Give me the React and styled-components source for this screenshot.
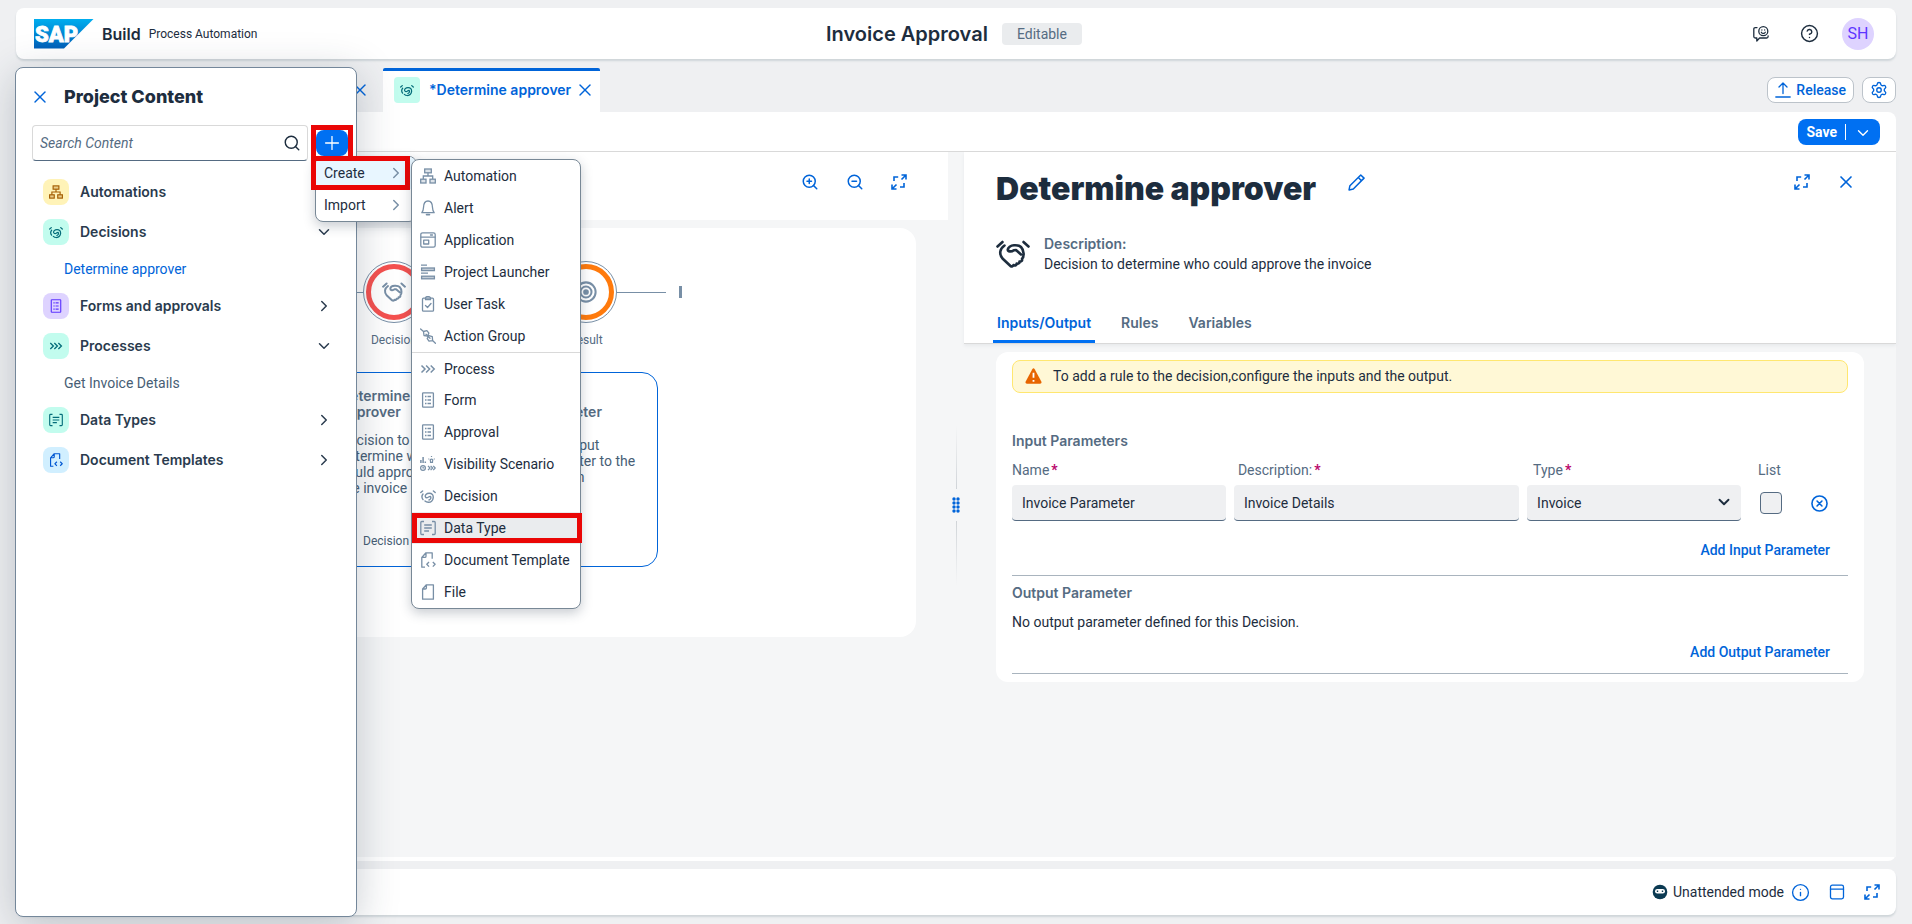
import React from "react";
import styled, { createGlobalStyle, css } from "styled-components";
import { X, Search, Plus, ChevronRight, ChevronDown, ZoomIn, ZoomOut, CircleQuestionMark, Info, Settings } from "lucide-react";

const font = `"Roboto", "Liberation Sans", sans-serif`;
const boldFont = `"Inter", "Roboto", "Liberation Sans", sans-serif`;
const c = {
  text: "#1d2d3e",
  label: "#556b82",
  icon: "#788fa6",
  blue: "#0064d9",
  brand: "#0070f2",
  line: "#d9d9d9",
  shell: "#eff0f2",
  base: "#f5f6f7",
  red: "#ea0606",
};

const strong = css`
  font-family: ${boldFont};
  font-weight: 600;
`;

const Global = createGlobalStyle`
  * { box-sizing: border-box; }
  body { margin: 0; background: ${c.shell}; color: ${c.text}; font: 14px/20px ${font}; }
  h1, h2, h3, p, ul { margin: 0; padding: 0; }
  h1, h2, h3 { font-family: ${boldFont}; }
  ul { list-style: none; }
  button, input, select { font: inherit; color: inherit; margin: 0; }
  button { border: 0; padding: 0; background: none; cursor: pointer; }
  svg { display: block; flex: none; }
`;

/* ---------- icons ---------- */

const Svg = ({ size = 16, vb = "0 0 16 16", w = 1.3, children, ...rest }) => (
  <svg width={size} height={size} viewBox={vb} fill="none" stroke="currentColor" strokeWidth={w} strokeLinecap="round" strokeLinejoin="round" aria-hidden="true" {...rest}>
    {children}
  </svg>
);
const AutomationIcon = (p) => (
  <Svg {...p} strokeLinecap="butt" strokeLinejoin="miter">
    <rect x="4.7" y="1" width="6.6" height="3.8" fill="currentColor" fillOpacity=".25" />
    <rect x=".7" y="11.2" width="5.3" height="3.8" fill="currentColor" fillOpacity=".25" />
    <rect x="10" y="11.2" width="5.3" height="3.8" fill="currentColor" fillOpacity=".25" />
    <path d="M8 4.8V8M3.3 11V8h9.4v3" />
  </Svg>
);
const BellIcon = (p) => (
  <Svg {...p}>
    <path d="M1.8 12.7h12.4c-1.5-1.4-1.6-3-1.7-5.2C12.4 3.5 10.7 1 8 1S3.6 3.5 3.5 7.5c-.1 2.2-.2 3.8-1.7 5.2z" />
    <path d="M6.6 14.6h2.8" strokeWidth="1.8" />
  </Svg>
);
const AppIcon = (p) => (
  <Svg {...p}>
    <rect x=".8" y=".8" width="14.4" height="14.4" rx="1.8" />
    <path d="M1 5.2h14M10.5 3h2" />
    <rect x="3.7" y="8.2" width="5" height="3.8" />
  </Svg>
);
const LauncherIcon = (p) => (
  <Svg {...p} strokeLinecap="butt" strokeLinejoin="miter">
    <path d="M1 1.2h6M1 9.2h7" />
    <rect x="1.6" y="4" width="12.8" height="2.6" fill="currentColor" fillOpacity=".45" />
    <rect x="1.6" y="12.2" width="12.8" height="2.6" fill="currentColor" fillOpacity=".45" />
  </Svg>
);
const TaskIcon = (p) => (
  <Svg {...p}>
    <rect x="2.5" y="2.2" width="11" height="13" rx="1" />
    <path d="M5.5 2.2a2.5 1.7 0 0 1 5 0v1.5h-5zM5.5 9.5l2 2 3.5-4" />
  </Svg>
);
const ActionIcon = (p) => (
  <Svg {...p}>
    <path d="M.6.9 3.5 3.5M12.6 12.6l2.8 2.6M3.5 3.5l3.4-.9 2 2.5-1.4 3-3.5-.6zM12.6 12.6l-3.6.6-1.8-2.6 1.7-3 3.4 1z" />
    <path d="m6 6.2 4 4" />
  </Svg>
);
const ProcessIcon = (p) => (
  <Svg {...p} w={1.5} strokeLinecap="butt" strokeLinejoin="miter">
    <path d="M1.5 4.5 5 8l-3.5 3.5M6.1 4.5 9.6 8l-3.5 3.5M10.7 4.5 14.2 8l-3.5 3.5" />
  </Svg>
);
const FormIcon = (p) => (
  <Svg {...p} strokeLinecap="butt">
    <rect x="2.6" y=".8" width="10.8" height="14.4" rx=".6" />
    <path d="M5 4.5h1.5M7.5 4.5H11M5 8h1.5M7.5 8H11M5 11.5h1.5M7.5 11.5H11" />
  </Svg>
);
const VisibilityIcon = (p) => (
  <Svg {...p} w={1.2} strokeLinecap="butt">
    <path d="M.9 7V4M3.1 7V1M5.3 7V5.5" strokeWidth="1.5" />
    <path d="M10.5 4.8c-1.6-2.2 3.6-2.2 2 0v1.6h-2zM11.5 0v1M8.3 3h1M13.8 3h1" />
    <circle cx="3" cy="12" r="2.4" />
    <path d="M3 10.8V12h1.3M8 9.8l2 2.2-2 2.2M10.6 9.8l2 2.2-2 2.2M13.2 9.8l2 2.2-2 2.2" />
  </Svg>
);
const HandshakeIcon = ({ w = 2.8, ...p }) => (
  <Svg vb="0 -3 34 34" w={w} {...p}>
    <path d="M1.5 6.5l5-4.5M27.500 2l5 4.500" />
    <path d="M8.500 5.500C3.500 9 3 14 6.500 18.500l8 7.500c1.500.8 2.500.2 3-1 1.800 1 3 .2 3.200-1.500 1.800.6 3-.4 2.800-2 2 .4 3-1 2.500-2.800 2.200-1.600 2.400-8.200-1-11.700-2-2-4.500-1.800-7-1.700-3.500.1-6 2.200-6.200 4.200-.1 2.200 3.600 2.600 6 .7l2.200-.2 5 4.500" />
  </Svg>
);
/* The compact variant is drawn wider and lower so that it stays legible at 16px. */
const SmallHandshakeIcon = (p) => (
  <Svg {...p} w={1.4}>
    <path d="M.8 4.600 2.600 3M13.400 3l1.800 1.600M3 6C1.400 8 1.800 10 3 11.600M5 13c1.600 1.600 5 1.800 6.600.2 1.800-1.600 2.200-5 .8-6.800C11 5 7.600 4.800 6 6.400c-1.400 1.500-.6 3.600 1 3.400 1.500-.2 2-1.600 3.400-1.400.8 1.200.6 2.800-1.400 3.600" />
  </Svg>
);
const DataIcon = (p) => (
  <Svg {...p} strokeLinecap="butt">
    <path d="M4 1.500H1.800c-.6 0-1 .4-1 1v11c0 .6.4 1 1 1H4M12 1.500h2.200c.6 0 1 .4 1 1v11c0 .6-.4 1-1 1H12M4.200 5h7.600M4.200 8h7.600M4.200 11H9" />
  </Svg>
);
const TemplateIcon = (p) => (
  <Svg {...p} strokeLinecap="butt">
    <path d="M5 15.200H1.800V5.500L6 .8h6.200v6M6 .8v3.400c0 .8-.4 1.200-1.200 1.200H1.800" />
    <path d="m9 10-2.200 2.300L9 14.600M12.800 10l2.300 2.300-2.300 2.300" />
  </Svg>
);
const FileIcon = (p) => (
  <Svg {...p}>
    <path d="M2.600 15.200V5L6.400.8h7v14.400zM6.400.8v3c0 .8-.4 1.200-1.200 1.200H2.600" />
  </Svg>
);
const ExpandIcon = (p) => (
  <Svg {...p} w={1.6} strokeLinecap="butt" strokeLinejoin="miter">
    <path d="M10.500 1H15v4.500M15 1l-4.500 4.500M5.500 15H1v-4.500M1 15l4.500-4.500M3 7V3h4.200M13 9v4H9" />
  </Svg>
);
const PencilIcon = (p) => (
  <Svg {...p} w={1.4}>
    <path d="M1 15l.8-4L12 .9l3.100 3L5 14.200zM9.700 3.300l3 3" />
  </Svg>
);
const TargetIcon = (p) => (
  <Svg {...p} vb="0 0 24 24" w={2.2}>
    <circle cx="12" cy="12" r="10.5" />
    <circle cx="12" cy="12" r="6" />
    <circle cx="12" cy="12" r="2" fill="currentColor" />
  </Svg>
);
const UploadIcon = (p) => (
  <Svg {...p}>
    <path d="M8 11.500V1.200M4 5l4-4 4 4M.8 15h14.400" />
  </Svg>
);
const FeedbackIcon = (p) => (
  <Svg {...p}>
    <circle cx="10.3" cy="5.2" r="4.5" />
    <path d="M8.300 6.200c.9 1.600 3.100 1.600 4 0M8.900 3.900v.1M11.700 3.900v.1" />
    <path d="M4 1.600H2.300c-1 0-1.500.6-1.500 1.500v7.400c0 1 .5 1.500 1.500 1.500h1.500v3l2.800-3h7c1 0 1.500-.5 1.500-1.500V9.800" />
  </Svg>
);
const RemoveIcon = (p) => (
  <Svg {...p} w={1.5}>
    <circle cx="8" cy="8" r="7.1" />
    <path d="M5.700 5.700l4.600 4.600M10.300 5.700l-4.600 4.600" />
  </Svg>
);
const WarningIcon = () => (
  <svg width="17" height="16" viewBox="0 0 17 16" aria-hidden="true">
    <path d="M7.300 1.200q1.200-2 2.400 0l6.600 12.200q.8 2-1.200 2.300H1.900q-2-.3-1.200-2.300z" fill="#e76500" />
    <path d="M8.500 4.800v5M8.500 12v1.800" stroke="#fff" strokeWidth="1.8" />
  </svg>
);
const RobotIcon = () => (
  <svg width="16" height="16" viewBox="0 0 16 16" aria-hidden="true">
    <circle cx="8" cy="8" r="7.3" fill="#0b3a52" />
    <rect x="3" y="5" width="10" height="4.6" rx="2.3" fill="#fff" />
    <path d="M5.500 6.500v1.600M10.500 6.500v1.600" stroke="#0b3a52" strokeWidth="1.4" />
  </svg>
);
const WindowIcon = () => (
  <Svg>
    <rect x="1.5" y="1.2" width="13" height="13.6" rx="1.8" />
    <path d="M1.500 5.200h13" />
  </Svg>
);
const SapLogo = () => (
  <svg width="60" height="30" viewBox="0 0 60 30" role="img" aria-label="SAP">
    <defs>
      <linearGradient id="sapBlue" x1="0" y1="0" x2="0" y2="1">
        <stop offset="0" stopColor="#00aeef" />
        <stop offset="1" stopColor="#005fb8" />
      </linearGradient>
    </defs>
    <path d="M0 0h59.500L30 29.500H0z" fill="url(#sapBlue)" />
    <text x="1" y="23" fill="#fff" stroke="#fff" strokeWidth=".8" fontFamily="Roboto, sans-serif" fontSize="22" fontWeight="900">SAP</text>
  </svg>
);

/* ---------- shell ---------- */

const Page = styled.div`
  position: relative;
  display: flex;
  flex-direction: column;
  min-height: 100vh;
  padding: 8px 16px 9px;
  overflow: hidden;
`;
const surface = css`
  background: #fff;
  border-radius: 8px;
  box-shadow: 0 2px 2px #cfd5d9;
`;
const ShellBar = styled.header`
  ${surface}
  display: grid;
  grid-template-columns: 1fr auto 1fr;
  align-items: center;
  height: 51px;
  padding: 0 22px 0 18px;
`;
const Brand = styled.div`
  display: flex;
  align-items: center;
  gap: 8px;
`;
const BrandName = styled.span`
  ${strong}
  font-size: 16px;
`;
const BrandSub = styled.span`
  font-size: 12px;
`;
const ProjectTitle = styled.div`
  display: flex;
  align-items: center;
  gap: 14px;
  h2 { font-size: 20px; line-height: 24px; font-weight: 600; }
`;
const Tag = styled.span`
  padding: 1px 15px;
  border-radius: 4px;
  background: #eaecee;
  color: ${c.label};
`;
const ShellActions = styled.div`
  display: flex;
  justify-content: flex-end;
  align-items: center;
  gap: 31px;
`;
const Avatar = styled.button`
  width: 32px;
  height: 32px;
  margin-left: -8px;
  border-radius: 50%;
  background: #ded3ff;
  color: #5d36ff;
  font-size: 16px;
`;
const IconButton = styled.button`
  display: flex;
  align-items: center;
  justify-content: center;
  color: ${(p) => p.$color || c.blue};
`;

const TabBar = styled.nav`
  display: flex;
  height: 44px;
  margin-top: 9px;
`;
const Tab = styled.div`
  ${strong}
  display: flex;
  align-items: center;
  gap: 4px;
  padding: 0 5px 3px 11px;
  border-top: 3px solid ${c.blue};
  border-radius: 2px 2px 0 0;
  background: #fff;
  color: ${c.blue};
  > span { margin-right: 5px; }
`;
const BackTab = styled.div`
  display: flex;
  justify-content: flex-end;
  align-items: center;
  width: 367px;
  padding-right: 13px;
`;
const TabActions = styled.div`
  display: flex;
  align-items: center;
  gap: 8px;
  margin-left: auto;
`;
const OutlineButton = styled.button`
  display: flex;
  align-items: center;
  justify-content: center;
  gap: 5px;
  height: 26px;
  && { padding: 0 7px; }
  border: 1px solid #bcc3ca;
  border-radius: 8px;
  background: #fff;
  color: ${c.blue};
  font-weight: 500;
`;

const Workspace = styled.main`
  display: flex;
  flex-direction: column;
  flex: 1;
  padding-bottom: 4px;
  border-radius: 0 8px 8px 8px;
  background: #fff;
`;
const Toolbar = styled.div`
  display: flex;
  justify-content: flex-end;
  align-items: center;
  height: 40px;
  padding: 0 16px;
  border-bottom: 1px solid ${c.line};
`;
const SplitButton = styled.div`
  display: flex;
  align-items: center;
  height: 26px;
  border-radius: 8px;
  background: ${c.brand};
  color: #fff;
  font-weight: 700;
  button { height: 16px; line-height: 16px; }
  button:first-child { padding: 0 8px; }
  button:last-child { padding: 0 8px; border-left: 1px solid #fff; }
`;
const Panels = styled.div`
  display: flex;
  flex: 1;
  background: ${c.base};
`;

/* ---------- diagram side ---------- */

const DiagramPanel = styled.section`
  flex: 1 1 0;
  min-width: 0;
`;
const DiagramTools = styled.div`
  display: flex;
  justify-content: flex-end;
  gap: 27px;
  height: 68px;
  padding: 0 41px 8px;
  background: #fff;
`;
const Canvas = styled.div`
  margin: 8px 32px 0;
  padding: 33px 0 70px;
  border-radius: 16px;
  background: #fff;
  overflow: hidden;
`;
const Flow = styled.div`
  display: flex;
  margin-left: 273px;
`;
const Connector = styled.div`
  width: ${(p) => p.$width}px;
  height: 1px;
  margin-top: 31px;
  background: ${c.icon};
`;
const EndMark = styled.div`
  width: 3px;
  height: 12px;
  margin: 25px 0 0 13px;
  background: ${c.icon};
`;
const Node = styled.div`
  display: flex;
  flex-direction: column;
  align-items: center;
  gap: 7px;
  width: 62px;
  color: ${c.label};
  font-size: 12px;
`;
const Ring = styled.div`
  display: flex;
  align-items: center;
  justify-content: center;
  width: 62px;
  height: 62px;
  padding: 2px;
  border: 1px solid ${c.icon};
  border-radius: 50%;
  color: ${c.icon};
  span {
    display: flex;
    align-items: center;
    justify-content: center;
    width: 100%;
    height: 100%;
    border: 5px solid ${(p) => p.$color};
    border-radius: 50%;
  }
`;
const NodeCards = styled.div`
  display: flex;
  gap: 84px;
  width: 336px;
  height: 195px;
  margin: 22px 0 0 274px;
  padding: 15px 17px 17px;
  border: 1px solid ${c.blue};
  border-radius: 16px;
`;
const NodeCard = styled.article`
  display: flex;
  flex-direction: column;
  gap: ${(p) => p.$gap}px;
  width: 108px;
  line-height: 16px;
  color: #475e75;
  h3 { font-size: 14px; line-height: 16px; font-weight: 600; color: ${c.label}; }
  footer { margin: auto 0 0 23px; font-size: 12px; }
`;

const Splitter = styled.div`
  display: flex;
  flex-direction: column;
  align-items: center;
  gap: 8px;
  width: 16px;
  padding-top: 273px;
`;
const SplitterLine = styled.div`
  width: 1px;
  height: 64px;
  background: linear-gradient(${(p) => (p.$up ? "to top" : "to bottom")}, #d0d4d8, transparent);
`;

/* ---------- properties side ---------- */

const PropertyPanel = styled.section`
  flex: 1 1 0;
  min-width: 0;
`;
const PanelHead = styled.div`
  padding: 16px 40px 0 32px;
  border-bottom: 1px solid ${c.line};
  background: #fff;
  box-shadow: 0 2px 3px #e8eaec;
`;
const TitleRow = styled.div`
  display: flex;
  gap: 32px;
  height: 42px;
  h1 { font-size: 32px; line-height: 42px; font-weight: 900; }
  button { height: 28px; }
`;
const PanelActions = styled.div`
  display: flex;
  gap: 26px;
  margin-left: auto;
`;
const DescRow = styled.div`
  display: flex;
  align-items: center;
  gap: 14px;
  margin-top: 24px;
  b { ${strong} display: block; color: ${c.label}; }
`;
const PropTabs = styled.div`
  display: flex;
  gap: 22px;
  margin: 33px 0 0 -3px;
`;
const PropTab = styled.button`
  ${strong}
  height: 36px;
  && { padding: 0 4px 2px; }
  border-bottom: 3px solid ${(p) => (p.$active ? c.brand : "transparent")};
  color: ${(p) => (p.$active ? c.blue : c.label)};
`;
const Card = styled.div`
  margin: 8px 32px 0;
  padding: 8px 16px;
  border-radius: 12px;
  background: #fff;
`;
const Message = styled.div`
  display: flex;
  align-items: center;
  gap: 11px;
  height: 33px;
  padding: 0 12px 1px;
  border: 1px solid #ffe770;
  border-radius: 8px;
  background: #fff8d6;
`;
const Section = styled.section`
  padding-top: ${(p) => p.$top}px;
  border-bottom: 1px solid #a9b4be;
  h3 { font-size: 14px; line-height: 20px; font-weight: 600; color: ${c.label}; }
  p { margin-top: 9px; }
`;
const Fields = styled.div`
  display: grid;
  grid-template-columns: 3fr 4fr 3fr 46px 45px;
  gap: 8px;
  margin-top: 9px;
`;
const Field = styled.div`
  position: relative;
  display: flex;
  flex-direction: column;
  gap: 5px;
  min-width: 0;
  label { height: 20px; padding-left: ${(p) => p.$inset || 0}px; color: ${c.label}; }
  label b { margin-left: 2px; color: #ba066c; }
  > svg { position: absolute; right: 8px; bottom: 10px; pointer-events: none; }
`;
const control = css`
  width: 100%;
  height: 36px;
  padding: 0 10px;
  border: 0;
  border-bottom: 1px solid ${c.label};
  border-radius: 4px;
  background: ${c.shell};
  appearance: none;
`;
const TextInput = styled.input`${control}`;
const Select = styled.select`${control}`;
const Check = styled.input`
  appearance: none;
  width: 22px;
  height: 22px;
  && { margin: 7px 0 0 11px; }
  border: 1px solid ${c.label};
  border-radius: 4px;
  background: ${c.shell};
`;
const RemoveButton = styled(IconButton)`
  align-self: end;
  justify-self: start;
  height: 36px;
  && { padding-left: 8px; }
`;
const AddButton = styled.button`
  display: block;
  && { margin: ${(p) => p.$above}px 18px ${(p) => p.$below}px auto; }
  color: ${c.blue};
  font-weight: 500;
`;

const StatusBar = styled.footer`
  ${surface}
  display: flex;
  justify-content: flex-end;
  align-items: center;
  gap: 7px;
  height: 46px;
  margin-top: 8px;
  padding: 0 16px;
`;
const StatusTools = styled.div`
  display: flex;
  gap: 19px;
`;
const Mode = styled.span`
  display: flex;
  align-items: center;
  gap: 5px;
`;

/* ---------- project drawer ---------- */

const Drawer = styled.aside`
  position: absolute;
  top: 67px;
  bottom: 7px;
  left: 15px;
  width: 342px;
  border: 1px solid #74879a;
  border-radius: 8px;
  background: #fff;
  box-shadow: 0 8px 40px rgba(34, 53, 72, 0.25);
`;
const DrawerHead = styled.div`
  display: flex;
  align-items: center;
  gap: 14px;
  height: 57px;
  padding: 0 14px;
  h2 { font-size: 18px; line-height: 24px; font-weight: 800; }
`;
const SearchRow = styled.div`
  display: flex;
  align-items: center;
  gap: 8px;
  padding: 0 8px 0 16px;
`;
const SearchBox = styled.label`
  display: flex;
  align-items: center;
  flex: 1;
  min-width: 0;
  height: 36px;
  padding: 0 6px 0 7px;
  border: 1px solid ${c.line};
  border-bottom-color: ${c.label};
  border-radius: 4px;
  input { flex: 1; min-width: 0; border: 0; padding: 0; outline: 0; background: none; }
  input::placeholder { color: ${c.label}; font-style: italic; opacity: 1; }
`;
const AddMenu = styled.div`
  position: relative;
`;
const AddContent = styled.button`
  display: flex;
  align-items: center;
  justify-content: center;
  width: 32px;
  height: 26px;
  border-radius: 8px;
  background: ${c.brand};
  color: #fff;
`;
const Highlight = styled.span`
  position: absolute;
  inset: ${(p) => p.$inset};
  z-index: 2;
  border: 5px solid ${c.red};
  pointer-events: none;
`;
const Menu = styled.ul`
  position: absolute;
  z-index: 1;
  top: ${(p) => p.$top}px;
  left: ${(p) => p.$left}px;
  width: ${(p) => p.$width}px;
  border: 1px solid #788896;
  border-radius: 8px;
  background: #fff;
  box-shadow: 0 4px 12px rgba(34, 53, 72, 0.25);
`;
const MenuItem = styled.li`
  position: relative;
  border-top: ${(p) => (p.$divided ? `1px solid ${c.line}` : 0)};
  button {
    display: flex;
    align-items: center;
    gap: 8px;
    width: 100%;
    height: ${(p) => (p.$divided ? 31 : 32)}px;
    padding: 0 ${(p) => (p.$sub ? 11 : 8)}px 0 8px;
    border-radius: ${(p) => (p.$round ? "7px 7px 0 0" : 0)};
    background: ${(p) => p.$fill || "none"};
    text-align: left;
    white-space: nowrap;
  }
  svg { color: ${c.icon}; }
`;
const ItemLabel = styled.span`
  flex: 1;
`;
const Tree = styled.ul`
  margin-top: 11px;
`;
const Group = styled.button`
  ${strong}
  display: flex;
  align-items: center;
  gap: 11px;
  width: 100%;
  height: 40px;
  && { padding: 0 23px 0 27px; }
  color: #2a3b4e;
  > svg { margin-left: auto; }
`;
const Badge = styled.span`
  display: flex;
  align-items: center;
  justify-content: center;
  width: 26px;
  height: 26px;
  border-radius: ${(p) => p.$radius || 8}px;
  background: ${(p) => p.$bg};
  color: ${(p) => p.$fg};
`;
const Leaf = styled.a`
  display: block;
  height: 34px;
  padding: 7px 0 7px 48px;
  color: ${(p) => (p.$active ? c.blue : "#475e75")};
  text-decoration: none;
`;

const teal = { $bg: "#c2fcee", $fg: "#046c7a" };
const groups = [
  { name: "Automations", icon: AutomationIcon, $bg: "#fff3b8", $fg: "#a45d00" },
  { name: "Decisions", icon: SmallHandshakeIcon, ...teal, open: true, leaf: "Determine approver", active: true },
  { name: "Forms and approvals", icon: FormIcon, $bg: "#ded3ff", $fg: "#5d36ff" },
  { name: "Processes", icon: ProcessIcon, ...teal, open: true, leaf: "Get Invoice Details" },
  { name: "Data Types", icon: DataIcon, ...teal },
  { name: "Document Templates", icon: TemplateIcon, $bg: "#d1efff", $fg: "#0057d2" },
];
const createItems = [
  ["Automation", AutomationIcon],
  ["Alert", BellIcon],
  ["Application", AppIcon],
  ["Project Launcher", LauncherIcon],
  ["User Task", TaskIcon],
  ["Action Group", ActionIcon],
  ["Process", ProcessIcon],
  ["Form", FormIcon],
  ["Approval", FormIcon],
  ["Visibility Scenario", VisibilityIcon],
  ["Decision", SmallHandshakeIcon],
  ["Data Type", DataIcon],
  ["Document Template", TemplateIcon],
  ["File", FileIcon],
];

function ProjectDrawer() {
  return (
    <Drawer>
      <DrawerHead>
        <IconButton aria-label="Close project content"><X size={20} strokeWidth={1.7} /></IconButton>
        <h2>Project Content</h2>
      </DrawerHead>
      <SearchRow>
        <SearchBox>
          <input type="search" placeholder="Search Content" aria-label="Search Content" />
          <Search size={18} strokeWidth={1.9} />
        </SearchBox>
        <AddMenu>
          <AddContent aria-label="Add content"><Plus size={22} strokeWidth={1.4} /></AddContent>
          <Highlight $inset="-5px" />
          <Menu $top={26} $left={-1} $width={102}>
            <MenuItem $fill="#e8f6ff" $round $sub>
              <button><ItemLabel>Create</ItemLabel><ChevronRight size={18} /></button>
              <Highlight $inset="-1px 6px -1px -5px" />
            </MenuItem>
            <MenuItem $sub>
              <button><ItemLabel>Import</ItemLabel><ChevronRight size={18} /></button>
            </MenuItem>
          </Menu>
          <Menu $top={29} $left={95} $width={170}>
            {createItems.map(([name, Icon]) => (
              <MenuItem key={name} $divided={name === "Process"} $fill={name === "Data Type" ? "#eaecee" : undefined}>
                <button><Icon /><ItemLabel>{name}</ItemLabel></button>
                {name === "Data Type" && <Highlight $inset="1px -2px 1px 0" />}
              </MenuItem>
            ))}
          </Menu>
        </AddMenu>
      </SearchRow>
      <Tree>
        {groups.map(({ name, icon: Icon, $bg, $fg, open, leaf, active }) => (
          <li key={name}>
            <Group>
              <Badge $bg={$bg} $fg={$fg}><Icon size={14} /></Badge>
              {name}
              {name !== "Automations" && (open ? <ChevronDown size={18} /> : <ChevronRight size={18} />)}
            </Group>
            {leaf && <Leaf href="#" $active={active}>{leaf}</Leaf>}
          </li>
        ))}
      </Tree>
    </Drawer>
  );
}

function Diagram() {
  return (
    <DiagramPanel>
      <DiagramTools>
        <IconButton aria-label="Zoom in"><ZoomIn size={18} /></IconButton>
        <IconButton aria-label="Zoom out"><ZoomOut size={18} /></IconButton>
        <IconButton aria-label="Fit to screen"><ExpandIcon /></IconButton>
      </DiagramTools>
      <Canvas>
        <Flow>
          <Connector $width={42} />
          <Node><Ring $color="#f5514f"><span><HandshakeIcon size={24} w={2.8} /></span></Ring>Decision</Node>
          <Connector $width={130} />
          <Node><Ring $color="#ff7a0c"><span><TargetIcon size={22} /></span></Ring>Result</Node>
          <Connector $width={49} />
          <EndMark />
        </Flow>
        <NodeCards>
          <NodeCard $gap={12}>
            <h3>Determine approver</h3>
            <p>Decision to determine who could approve the invoice</p>
            <footer>Decision</footer>
          </NodeCard>
          <NodeCard $gap={17}>
            <h3>Output Parameter</h3>
            <p>The output parameter to the decision</p>
          </NodeCard>
        </NodeCards>
      </Canvas>
    </DiagramPanel>
  );
}

function Properties() {
  return (
    <PropertyPanel>
      <PanelHead>
        <TitleRow>
          <h1>Determine approver</h1>
          <IconButton aria-label="Edit"><PencilIcon size={17} /></IconButton>
          <PanelActions>
            <IconButton aria-label="Full screen"><ExpandIcon /></IconButton>
            <IconButton aria-label="Close"><X size={20} /></IconButton>
          </PanelActions>
        </TitleRow>
        <DescRow>
          <HandshakeIcon size={34} w={2.6} />
          <div><b>Description:</b>Decision to determine who could approve the invoice</div>
        </DescRow>
        <PropTabs>
          <PropTab $active>Inputs/Output</PropTab>
          <PropTab>Rules</PropTab>
          <PropTab>Variables</PropTab>
        </PropTabs>
      </PanelHead>
      <Card>
        <Message><WarningIcon />To add a rule to the decision,configure the inputs and the output.</Message>
        <Section $top={38}>
          <h3>Input Parameters</h3>
          <Fields>
            <Field><label htmlFor="name">Name<b>*</b></label><TextInput id="name" defaultValue="Invoice Parameter" /></Field>
            <Field $inset={4}><label htmlFor="desc">Description:<b>*</b></label><TextInput id="desc" defaultValue="Invoice Details" /></Field>
            <Field $inset={6}>
              <label htmlFor="type">Type<b>*</b></label>
              <Select id="type" defaultValue="Invoice"><option>Invoice</option></Select>
              <ChevronDown size={18} strokeWidth={2.5} />
            </Field>
            <Field $inset={9}><label htmlFor="list">List</label><Check id="list" type="checkbox" /></Field>
            <RemoveButton aria-label="Remove parameter"><RemoveIcon size={17} /></RemoveButton>
          </Fields>
          <AddButton $above={19} $below={15}>Add Input Parameter</AddButton>
        </Section>
        <Section $top={7}>
          <h3>Output Parameter</h3>
          <p>No output parameter defined for this Decision.</p>
          <AddButton $above={10} $below={11}>Add Output Parameter</AddButton>
        </Section>
      </Card>
    </PropertyPanel>
  );
}

export default function App() {
  return (
    <>
      <Global />
      <Page>
        <ShellBar>
          <Brand>
            <SapLogo />
            <BrandName>Build</BrandName>
            <BrandSub>Process Automation</BrandSub>
          </Brand>
          <ProjectTitle>
            <h2>Invoice Approval</h2>
            <Tag>Editable</Tag>
          </ProjectTitle>
          <ShellActions>
            <IconButton $color={c.text} aria-label="Feedback"><FeedbackIcon /></IconButton>
            <IconButton $color={c.text} aria-label="Help"><CircleQuestionMark size={19} strokeWidth={1.8} /></IconButton>
            <Avatar>SH</Avatar>
          </ShellActions>
        </ShellBar>
        <TabBar>
          <BackTab><IconButton aria-label="Close tab"><X size={20} strokeWidth={1.7} /></IconButton></BackTab>
          <Tab>
            <Badge {...teal} $radius={4}><SmallHandshakeIcon size={14} /></Badge>
            *Determine approver
            <IconButton aria-label="Close tab"><X size={20} strokeWidth={1.7} /></IconButton>
          </Tab>
          <TabActions>
            <OutlineButton><UploadIcon />Release</OutlineButton>
            <OutlineButton aria-label="Settings"><Settings size={18} strokeWidth={1.8} /></OutlineButton>
          </TabActions>
        </TabBar>
        <Workspace>
          <Toolbar>
            <SplitButton>
              <button>Save</button>
              <button aria-label="More save options"><ChevronDown size={18} strokeWidth={1.8} /></button>
            </SplitButton>
          </Toolbar>
          <Panels>
            <Diagram />
            <Splitter>
              <SplitterLine $up />
              <svg width="8" height="16" viewBox="0 0 8 16" fill={c.blue} aria-hidden="true">
                {[2, 6, 10, 14].map((y) => <g key={y}><circle cx="2" cy={y} r="1.7" /><circle cx="6" cy={y} r="1.7" /></g>)}
              </svg>
              <SplitterLine />
            </Splitter>
            <Properties />
          </Panels>
        </Workspace>
        <StatusBar>
          <Mode><RobotIcon />Unattended mode</Mode>
          <StatusTools>
            <IconButton aria-label="Information"><Info size={19} strokeWidth={1.7} /></IconButton>
            <IconButton aria-label="Show panel"><WindowIcon /></IconButton>
            <IconButton aria-label="Expand"><ExpandIcon /></IconButton>
          </StatusTools>
        </StatusBar>
        <ProjectDrawer />
      </Page>
    </>
  );
}
